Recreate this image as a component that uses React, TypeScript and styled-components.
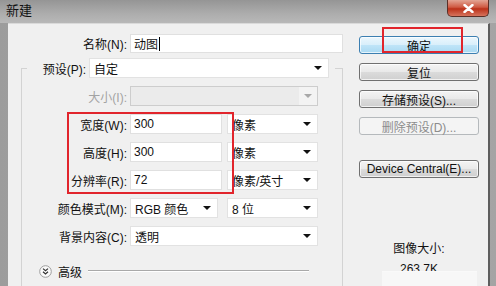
import styled, { createGlobalStyle } from "styled-components";

const GlobalStyle = createGlobalStyle`
  html, body { margin: 0; padding: 0; }
  body {
    background: #a6a6a6;
    font-family: "Liberation Sans", "Noto Sans CJK SC", sans-serif;
    font-size: 12px;
    color: #111;
  }
`;

const Window = styled.div`
  position: relative;
  width: 496px;
  height: 286px;
  overflow: hidden;
  display: flex;
  flex-direction: column;
  background: linear-gradient(90deg, #9c9c9c 0%, #b2b2b2 55%, #a4a4a4 100%);
`;

const TitleBar = styled.div`
  height: 23px;
  flex-shrink: 0;
  display: flex;
  align-items: flex-start;
  background: linear-gradient(180deg, #959595 0%, #adadad 60%, #b8b8b8 100%);
`;

const Title = styled.div`
  padding: 3px 0 0 6px;
  font-size: 13px;
  line-height: 16px;
  color: #111;
`;

const CloseButton = styled.div`
  margin-left: auto;
  margin-right: 7px;
  width: 42px;
  height: 17px;
  box-sizing: border-box;
  border: 1px solid #5b2f27;
  border-top: none;
  border-radius: 0 0 5px 5px;
  background: linear-gradient(180deg, #e3a594 0%, #cf5a43 45%, #bb3119 55%, #d6735d 100%);
  display: flex;
  align-items: center;
  justify-content: center;
`;

const Frame = styled.div`
  flex: 1;
  display: flex;
  padding: 0 6px 0 8px;
  min-height: 0;
`;

const Body = styled.div`
  flex: 1;
  display: flex;
  gap: 16px;
  padding: 10px 9px 0 0;
  background: #f0f0f0;
  border-top: 1px solid #dadada;
  border-right: 2px solid #5e5e5e;
`;

const FormColumn = styled.div`
  width: 335px;
  display: flex;
  flex-direction: column;
`;

const NameRow = styled.div`
  display: flex;
  align-items: center;
  height: 21px;
`;

const Label = styled.div<{ $width: number; $disabled?: boolean }>`
  width: ${(p) => p.$width}px;
  margin-right: 3px;
  text-align: right;
  white-space: nowrap;
  color: ${(p) => (p.$disabled ? "#a3a3a3" : "#111")};
`;

const TextField = styled.div<{ $width: number }>`
  width: ${(p) => p.$width}px;
  height: 100%;
  box-sizing: border-box;
  background: #fff;
  border: 1px solid #e0e0e0;
  padding-left: 3px;
  display: flex;
  align-items: center;
`;

const Caret = styled.span`
  display: inline-block;
  width: 1px;
  height: 14px;
  margin-left: 1px;
  background: #000;
`;

const SelectBox = styled.div<{ $width: number; $disabled?: boolean }>`
  width: ${(p) => p.$width}px;
  height: 100%;
  box-sizing: border-box;
  display: flex;
  align-items: center;
  padding-left: 4px;
  padding-right: ${(p) => (p.$disabled ? 0 : 6)}px;
  background: ${(p) => (p.$disabled ? "#ebebeb" : "#fff")};
  border: 1px solid ${(p) => (p.$disabled ? "#cdcdcd" : "#e2e2e2")};
  white-space: nowrap;
`;

const Arrow = styled.span<{ $disabled?: boolean }>`
  margin-left: auto;
  width: 0;
  height: 0;
  border-left: 4px solid transparent;
  border-right: 4px solid transparent;
  border-top: 4px solid ${(p) => (p.$disabled ? "#a8a8a8" : "#111")};
`;

const ArrowZone = styled.span`
  margin-left: auto;
  width: 18px;
  height: 100%;
  background: #f3f3f3;
  display: flex;
  align-items: center;
  justify-content: center;

  ${Arrow} {
    margin-left: 0;
  }
`;

const Group = styled.fieldset`
  margin: 5px 0 0 13px;
  width: 322px;
  box-sizing: border-box;
  padding: 8px 0 12px 0;
  border: 1px solid #d3d3d3;
  border-bottom: none;
  min-inline-size: 0;
  display: flex;
  flex-direction: column;
  gap: 8px;
`;

const Legend = styled.legend`
  margin-left: 5px;
  padding: 0 6px 0 13px;
`;

const LegendRow = styled.div`
  display: flex;
  align-items: center;
  height: 20px;
`;

const Row = styled.div`
  display: flex;
  align-items: center;
  height: 20px;
`;

const Pair = styled.div<{ $gap?: number }>`
  display: flex;
  height: 100%;
  gap: ${(p) => p.$gap ?? 5}px;
`;

const AdvancedRow = styled.div`
  display: flex;
  align-items: center;
  height: 20px;
  margin-top: 7px;
  padding-left: 17px;
  padding-right: 33px;
`;

const AdvancedLabel = styled.span`
  margin-left: 6px;
`;

const EtchedLine = styled.div`
  flex: 1;
  margin-left: 6px;
  height: 0;
  border-top: 1px solid #a9a9a9;
  border-bottom: 1px solid #ffffff;
`;

const ButtonColumn = styled.div`
  width: 120px;
  padding-top: 2px;
  display: flex;
  flex-direction: column;
  gap: 9px;
`;

const Button = styled.div<{ $variant?: "default" | "primary" | "disabled"; $gapBefore?: number }>`
  height: 18px;
  box-sizing: border-box;
  margin-top: ${(p) => p.$gapBefore ?? 0}px;
  border-radius: 3px;
  display: flex;
  align-items: center;
  justify-content: center;
  white-space: nowrap;
  border: 1px solid
    ${(p) =>
      p.$variant === "primary" ? "#3c7fb1" : p.$variant === "disabled" ? "#b5b9bc" : "#707070"};
  background: ${(p) =>
    p.$variant === "primary"
      ? "linear-gradient(180deg, #ecf7fd 0%, #d9effb 48%, #bfe4f8 52%, #a9d9f2 100%)"
      : p.$variant === "disabled"
      ? "#f4f4f4"
      : "linear-gradient(180deg, #f4f4f4 0%, #e9e9e9 48%, #dbdbdb 52%, #cfcfcf 100%)"};
  color: ${(p) => (p.$variant === "disabled" ? "#8c8c8c" : "#111")};
  box-shadow: inset 0 0 0 1px
    ${(p) => (p.$variant === "disabled" ? "transparent" : "rgba(255, 255, 255, 0.7)")};
`;

const ImageInfo = styled.div`
  position: relative;
  margin-top: 55px;
  display: flex;
  flex-direction: column;
  align-items: center;
  gap: 6px;
  line-height: 14px;
`;

const Preview = styled.div`
  position: absolute;
  left: 23px;
  top: 29px;
  width: 95px;
  height: 40px;
  background: #f7f7f7;
  border-top: 1px solid #f9f9f9;
`;

const Annotation = styled.div<{ $x: number; $y: number; $w: number; $h: number }>`
  position: absolute;
  left: ${(p) => p.$x}px;
  top: ${(p) => p.$y}px;
  width: ${(p) => p.$w}px;
  height: ${(p) => p.$h}px;
  box-sizing: border-box;
  border: 2px solid #e1252c;
  pointer-events: none;
`;

const CloseIcon = () => (
  <svg width="11" height="9" viewBox="0 0 11 9">
    <path d="M1.5 1 L9.5 8 M9.5 1 L1.5 8" stroke="#fff" strokeWidth="2.4" strokeLinecap="round" />
  </svg>
);

const ExpandIcon = () => (
  <svg width="13" height="13" viewBox="0 0 13 13">
    <circle cx="6.5" cy="6.5" r="5.8" fill="#fbfbfb" stroke="#9d9d9d" />
    <path d="M4 3.6 L6.5 5.8 L9 3.6 M4 6.8 L6.5 9 L9 6.8" fill="none" stroke="#333" strokeWidth="1.2" />
  </svg>
);

type SelectProps = { width: number; value?: string; disabled?: boolean };

const Select = ({ width, value, disabled }: SelectProps) => (
  <SelectBox $width={width} $disabled={disabled}>
    {value}
    {disabled ? (
      <ArrowZone>
        <Arrow $disabled />
      </ArrowZone>
    ) : (
      <Arrow />
    )}
  </SelectBox>
);

const sizeRows = [
  { label: "宽度(W):", value: "300", unit: "像素" },
  { label: "高度(H):", value: "300", unit: "像素" },
  { label: "分辨率(R):", value: "72", unit: "像素/英寸" },
];

export default function App() {
  return (
    <>
      <GlobalStyle />
      <Window>
        <TitleBar>
          <Title>新建</Title>
          <CloseButton>
            <CloseIcon />
          </CloseButton>
        </TitleBar>
        <Frame>
          <Body>
            <FormColumn>
              <NameRow>
                <Label $width={119}>名称(N):</Label>
                <TextField $width={213}>
                  动图
                  <Caret />
                </TextField>
              </NameRow>
              <Group>
                <Legend>
                  <LegendRow>
                    <Label $width={46}>预设(P):</Label>
                    <Select width={240} value="自定" />
                  </LegendRow>
                </Legend>
                <Row>
                  <Label $width={105} $disabled>
                    大小(I):
                  </Label>
                  <Select width={188} disabled />
                </Row>
                {sizeRows.map((r) => (
                  <Row key={r.label}>
                    <Label $width={105}>{r.label}</Label>
                    <Pair>
                      <TextField $width={92}>{r.value}</TextField>
                      <Select width={91} value={r.unit} />
                    </Pair>
                  </Row>
                ))}
                <Row>
                  <Label $width={105}>颜色模式(M):</Label>
                  <Pair $gap={9}>
                    <Select width={88} value="RGB 颜色" />
                    <Select width={91} value="8 位" />
                  </Pair>
                </Row>
                <Row>
                  <Label $width={105}>背景内容(C):</Label>
                  <Select width={188} value="透明" />
                </Row>
                <AdvancedRow>
                  <ExpandIcon />
                  <AdvancedLabel>高级</AdvancedLabel>
                  <EtchedLine />
                </AdvancedRow>
              </Group>
            </FormColumn>
            <ButtonColumn>
              <Button $variant="primary">确定</Button>
              <Button>复位</Button>
              <Button>存储预设(S)...</Button>
              <Button $variant="disabled">删除预设(D)...</Button>
              <Button $gapBefore={16}>Device Central(E)...</Button>
              <ImageInfo>
                <div>图像大小:</div>
                <div>263.7K</div>
                <Preview />
              </ImageInfo>
            </ButtonColumn>
          </Body>
        </Frame>
        <Annotation $x={382} $y={27} $w={81} $h={26} />
        <Annotation $x={67} $y={112} $w={167} $h={82} />
      </Window>
    </>
  );
}
